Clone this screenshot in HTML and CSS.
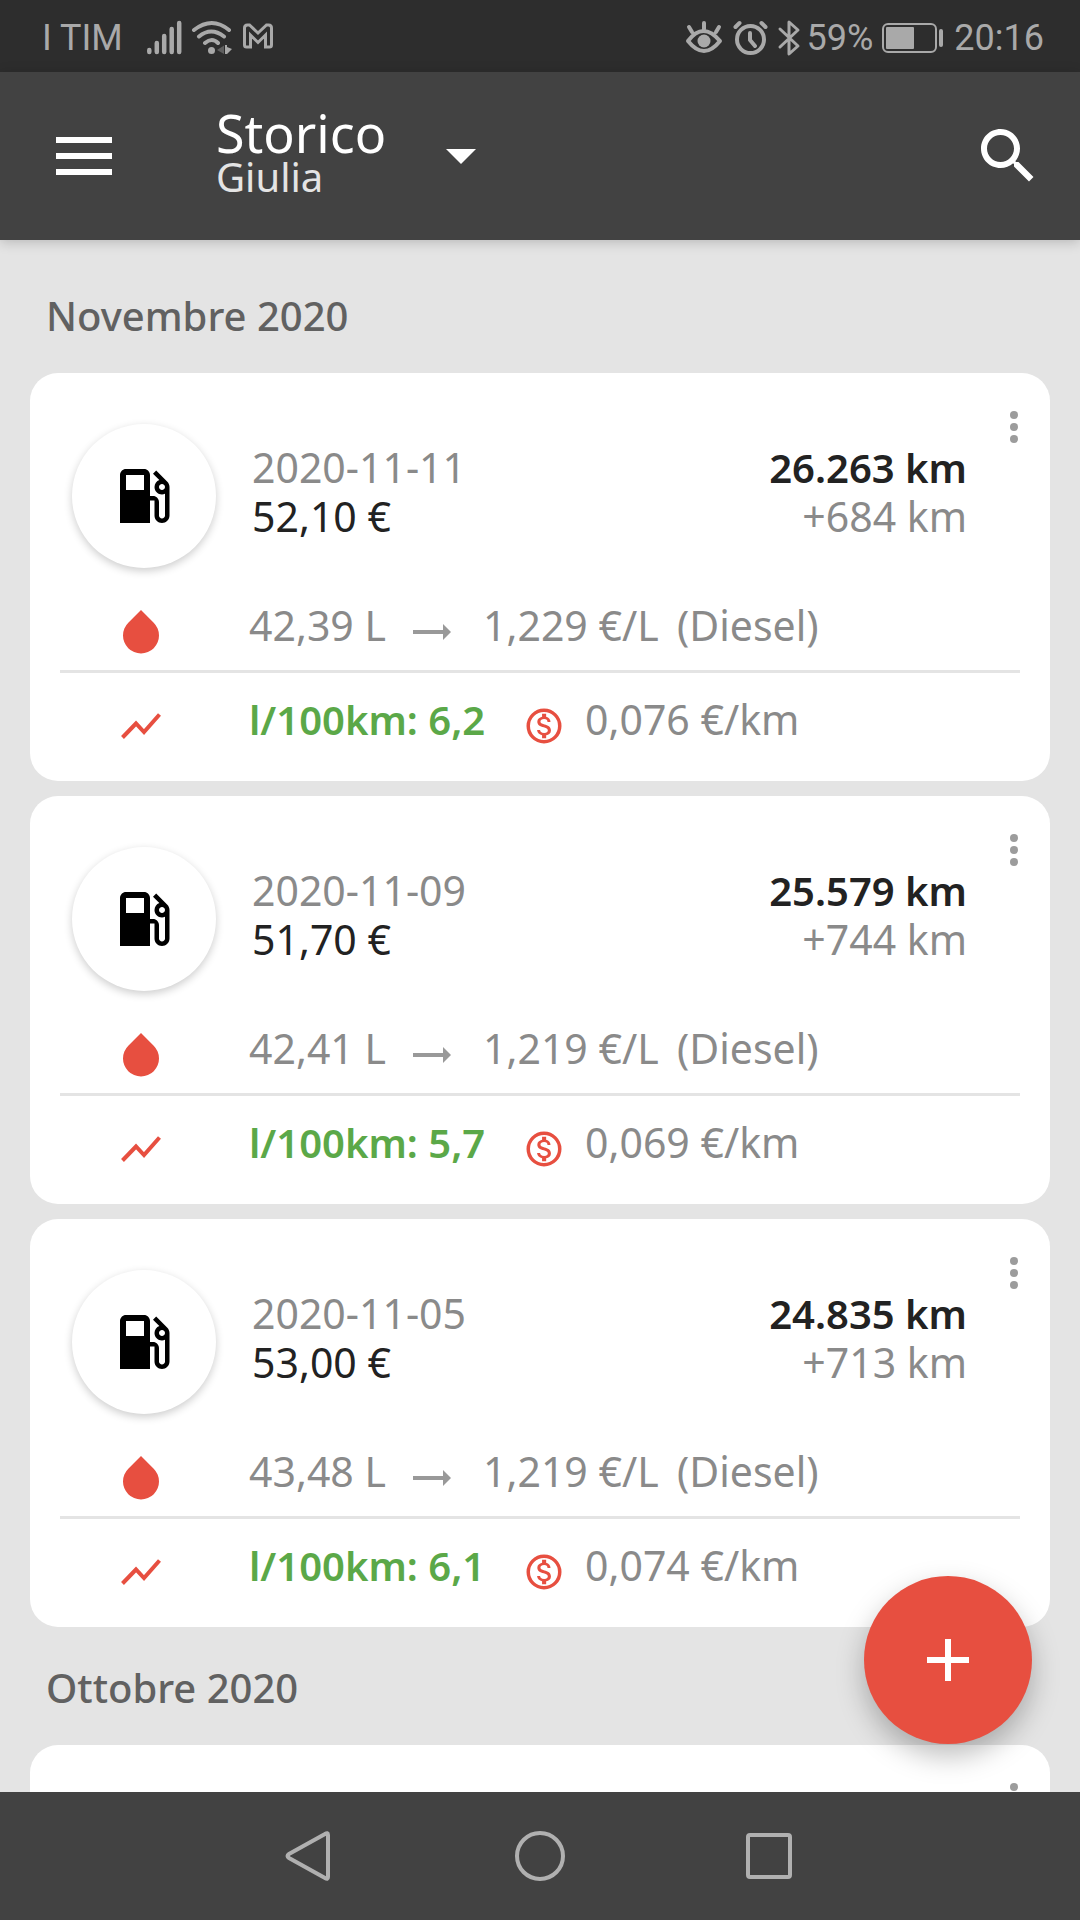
FILE: index.html
```html
<!DOCTYPE html>
<html lang="it">
<head>
<meta charset="utf-8">
<meta name="viewport" content="width=device-width, initial-scale=1">
<title>Storico</title>
<link rel="stylesheet" href="styles.css">
</head>
<body>
<svg class="sprite" aria-hidden="true">
  <symbol id="pump" viewBox="0 0 24 24"><path d="M19.77 7.23l.01-.01-3.72-3.72L15 4.56l2.11 2.11c-.94.36-1.61 1.26-1.61 2.33 0 1.38 1.12 2.5 2.5 2.5.36 0 .69-.08 1-.21v7.21c0 .55-.45 1-1 1s-1-.45-1-1V14c0-1.1-.9-2-2-2h-1V5c0-1.1-.9-2-2-2H6c-1.1 0-2 .9-2 2v16h10v-7.5h1.5v5c0 1.38 1.12 2.5 2.5 2.5s2.5-1.12 2.5-2.5V9c0-.69-.28-1.32-.73-1.77zM12 10H6V5h6v5zm6 0c-.55 0-1-.45-1-1s.45-1 1-1 1 .45 1 1-.45 1-1 1z"/></symbol>
  <symbol id="drop" viewBox="0 0 36 44"><path d="M18 0L30.7 12.7A18 18 0 1 1 5.3 12.7z"/></symbol>
  <symbol id="trend" viewBox="0 0 40 28"><path d="M1.5 25.5L15 11.5L23 20L38.500 2.500" fill="none" stroke="currentColor" stroke-width="4"/></symbol>
  <symbol id="coin" viewBox="0 0 24 24"><circle cx="12" cy="12" r="9" fill="none" stroke="currentColor" stroke-width="2"/><path d="M12.31 11.14c-1.77-.45-2.34-.94-2.34-1.67 0-.84.79-1.43 2.1-1.43 1.38 0 1.9.66 1.94 1.64h1.71c-.05-1.34-.87-2.57-2.49-2.97V5H10.9v1.69c-1.51.32-2.72 1.3-2.72 2.81 0 1.79 1.49 2.69 3.66 3.21 1.95.46 2.34 1.15 2.34 1.87 0 .53-.39 1.39-2.1 1.39-1.6 0-2.23-.72-2.32-1.64H8.04c.1 1.7 1.36 2.66 2.86 2.97V19h2.34v-1.67c1.52-.29 2.72-1.16 2.73-2.77-.01-2.2-1.9-2.96-3.66-3.42z"/></symbol>
  <symbol id="arrow" viewBox="0 0 38 16"><path d="M0 6h30V0l8 8-8 8v-6H0z"/></symbol>
  <symbol id="dots" viewBox="0 0 8 32"><circle cx="4" cy="4" r="4"/><circle cx="4" cy="16" r="4"/><circle cx="4" cy="28" r="4"/></symbol>
</svg>

<div class="status">
  <div class="status-side">
    <span class="carrier">I TIM</span>
    <svg width="130" height="36" viewBox="0 0 130 36" aria-hidden="true">
      <g stroke="currentColor" stroke-width="4.500" stroke-linecap="round"><path d="M4.300 30v2M11.800 23v9M19.200 16v16M26.700 9v23M34.200 3v29"/></g>
      <g fill="none" stroke="currentColor" stroke-width="4" stroke-linecap="round"><path d="M49 10q18-14 35 0M54 16.500q12-10 25 0M60 23q7-6 13 0"/></g>
      <circle cx="66.500" cy="30.500" r="3.500"/>
      <path d="M79 25.500v8.500l-7-4z" opacity=".4"/><path d="M80 25h2v2l5 2-5 5h-2z"/>
      <path d="M99.500 25V8q0-3 3-3h2l8.500 8 8.500-8h2q3 0 3 3v17q0 2-2 2h-4V15l-7.500 7.500L105.500 15v12h-4q-2 0-2-2z" fill="none" stroke="currentColor" stroke-width="3"/>
    </svg>
  </div>
  <div class="status-side">
    <svg width="122" height="38" viewBox="0 0 122 38" aria-hidden="true">
      <g fill="none" stroke="currentColor" stroke-width="4" stroke-linecap="round" stroke-linejoin="round">
        <path d="M3 22q15-20 32 0q-16 20-32 0zM19 10V4M7 13L4 8M31 13l3-5"/>
        <circle cx="65.500" cy="20.500" r="13.500"/><path d="M65 14v7l5 6M50.500 8l4-4M80.500 8l-4-4"/>
        <path d="M95 10l18 17-9 8V3l9 8-18 17" stroke-width="3"/>
      </g>
      <circle cx="19" cy="22" r="6.500"/>
    </svg>
    <span>59%</span>
    <svg class="battery" width="62" height="30" viewBox="0 0 62 30" aria-hidden="true">
      <rect x="1" y="1" width="53" height="28" rx="5" fill="none" stroke="currentColor" stroke-width="2"/>
      <rect x="4" y="4" width="28" height="22" rx="1"/><rect x="57" y="6" width="4" height="18" rx="2"/>
    </svg>
    <span>20:16</span>
  </div>
</div>

<header class="appbar">
  <button class="icon-button" aria-label="Menu"><svg width="56" height="38" viewBox="0 0 56 38"><path d="M0 0h56v6H0zM0 16h56v6H0zM0 32h56v6H0z"/></svg></button>
  <button class="picker">
    <span class="picker-text"><span class="picker-title">Storico</span><span class="picker-name">Giulia</span></span>
    <svg width="30" height="15" viewBox="0 0 30 15" aria-hidden="true"><path d="M0 0h30L15 15z"/></svg>
  </button>
  <button class="icon-button" aria-label="Cerca"><svg width="72" height="72" viewBox="0 0 24 24"><path d="M15.500 14h-.79l-.28-.27C15.410 12.590 16 11.110 16 9.500 16 5.910 13.090 3 9.500 3S3 5.910 3 9.500 5.910 16 9.500 16c1.610 0 3.090-.59 4.230-1.570l.27.28v.79l5 4.990L20.490 19l-4.990-5zm-6 0C7.010 14 5 11.990 5 9.500S7.010 5 9.500 5 14 7.010 14 9.500 11.990 14 9.500 14z"/></svg></button>
</header>

<main class="list">
  <h2 class="month">Novembre 2020</h2>

  <article class="card">
    <button class="more" aria-label="Altro"><svg width="8" height="32"><use href="#dots"/></svg></button>
    <div class="summary">
      <div class="badge"><svg width="72" height="72"><use href="#pump"/></svg></div>
      <div class="lines"><span class="muted">2020-11-11</span><span>52,10 €</span></div>
      <div class="lines lines-end"><strong>26.263 km</strong><span class="muted">+684 km</span></div>
    </div>
    <div class="row volume">
      <svg class="lead" width="36" height="44"><use href="#drop"/></svg>
      <span>42,39 L</span><svg class="arrow" width="38" height="16"><use href="#arrow"/></svg><span>1,229 €/L</span><span>(Diesel)</span>
    </div>
    <div class="row usage">
      <svg class="lead" width="40" height="28"><use href="#trend"/></svg>
      <strong class="good">l/100km: 6,2</strong><svg class="coin" width="42" height="42"><use href="#coin"/></svg><span>0,076 €/km</span>
    </div>
  </article>

  <article class="card">
    <button class="more" aria-label="Altro"><svg width="8" height="32"><use href="#dots"/></svg></button>
    <div class="summary">
      <div class="badge"><svg width="72" height="72"><use href="#pump"/></svg></div>
      <div class="lines"><span class="muted">2020-11-09</span><span>51,70 €</span></div>
      <div class="lines lines-end"><strong>25.579 km</strong><span class="muted">+744 km</span></div>
    </div>
    <div class="row volume">
      <svg class="lead" width="36" height="44"><use href="#drop"/></svg>
      <span>42,41 L</span><svg class="arrow" width="38" height="16"><use href="#arrow"/></svg><span>1,219 €/L</span><span>(Diesel)</span>
    </div>
    <div class="row usage">
      <svg class="lead" width="40" height="28"><use href="#trend"/></svg>
      <strong class="good">l/100km: 5,7</strong><svg class="coin" width="42" height="42"><use href="#coin"/></svg><span>0,069 €/km</span>
    </div>
  </article>

  <article class="card">
    <button class="more" aria-label="Altro"><svg width="8" height="32"><use href="#dots"/></svg></button>
    <div class="summary">
      <div class="badge"><svg width="72" height="72"><use href="#pump"/></svg></div>
      <div class="lines"><span class="muted">2020-11-05</span><span>53,00 €</span></div>
      <div class="lines lines-end"><strong>24.835 km</strong><span class="muted">+713 km</span></div>
    </div>
    <div class="row volume">
      <svg class="lead" width="36" height="44"><use href="#drop"/></svg>
      <span>43,48 L</span><svg class="arrow" width="38" height="16"><use href="#arrow"/></svg><span>1,219 €/L</span><span>(Diesel)</span>
    </div>
    <div class="row usage">
      <svg class="lead" width="40" height="28"><use href="#trend"/></svg>
      <strong class="good">l/100km: 6,1</strong><svg class="coin" width="42" height="42"><use href="#coin"/></svg><span>0,074 €/km</span>
    </div>
  </article>

  <h2 class="month">Ottobre 2020</h2>

  <article class="card card-empty">
    <button class="more" aria-label="Altro"><svg width="8" height="32"><use href="#dots"/></svg></button>
  </article>
</main>

<button class="fab" aria-label="Aggiungi"><svg width="42" height="42" viewBox="0 0 42 42"><path d="M18 0h6v18h18v6H24v18h-6V24H0v-6h18z"/></svg></button>

<nav class="navbar">
  <button class="nav-button" aria-label="Indietro"><svg width="52" height="52" viewBox="0 0 52 52"><path d="M40 4Q43 2 43 5v42q0 3-3 1L4 28q-3-2 0-4z"/></svg></button>
  <button class="nav-button" aria-label="Home"><svg width="52" height="52" viewBox="0 0 52 52"><circle cx="26" cy="26" r="23"/></svg></button>
  <button class="nav-button" aria-label="Recenti"><svg width="52" height="52" viewBox="0 0 52 52"><rect x="5" y="5" width="42" height="42" rx="2"/></svg></button>
</nav>
</body>
</html>
```
FILE: styles.css
```css
* {
  box-sizing: border-box;
}

body {
  margin: 0;
  height: 100vh;
  display: flex;
  flex-direction: column;
  overflow: hidden;
  position: relative;
  background: #e4e4e4;
  color: #222;
  font: 41px/49px "Noto Sans", "Open Sans", sans-serif;
}

button {
  border: 0;
  padding: 0;
  background: none;
  color: inherit;
  font: inherit;
  text-align: left;
}

svg {
  display: block;
  flex: none;
  fill: currentColor;
}

.sprite {
  position: absolute;
  width: 0;
  height: 0;
}

/* System status bar */
.status {
  flex: none;
  height: 72px;
  padding: 3px 36px 0 42px;
  display: flex;
  justify-content: space-between;
  align-items: center;
  background: #2d2d2d;
  color: #a9a9a9;
  font: 36px/42px Roboto, sans-serif;
}

.status-side {
  display: flex;
  align-items: center;
}

.carrier {
  margin-right: 22px;
}

.battery {
  margin: 0 10px 0 9px;
}

/* App bar */
.appbar {
  flex: none;
  height: 168px;
  padding: 0 36px 0 56px;
  display: flex;
  align-items: center;
  background: #424242;
  color: #fff;
  box-shadow: 0 2px 12px rgba(0, 0, 0, 0.2);
  z-index: 1;
}

.picker {
  margin: 0 auto 0 104px;
  display: flex;
  align-items: center;
  gap: 60px;
}

.picker-text {
  display: flex;
  flex-direction: column;
  padding-bottom: 6px;
}

.picker-title {
  font-size: 52px;
  line-height: 48px;
}

.picker-name {
  color: #e4e4e4;
  font-size: 40px;
  line-height: 40px;
}

/* History list */
.list {
  flex: 1;
  min-height: 0;
  overflow: hidden;
  padding: 15px 30px 0;
}

.month {
  margin: 0;
  padding: 36px 16px 33px;
  color: #616161;
  font-size: 40px;
  font-weight: 500;
}

.card {
  position: relative;
  padding: 51px 30px 37px;
  border-radius: 28px;
  background: #fff;
}

.card + .card {
  margin-top: 15px;
}

.card-empty {
  height: 408px;
}

.more {
  position: absolute;
  top: 24px;
  right: 12px;
  width: 48px;
  height: 60px;
  display: grid;
  place-items: center;
  color: #9c9c9c;
}

.summary {
  display: flex;
  padding: 0 53px 0 12px;
}

.badge {
  width: 144px;
  height: 144px;
  display: grid;
  place-items: center;
  border-radius: 50%;
  color: #000;
  box-shadow: 0 3px 9px rgba(0, 0, 0, 0.2);
}

.lines {
  display: flex;
  flex-direction: column;
  padding: 19px 0 0 36px;
}

.lines-end {
  margin-left: auto;
  text-align: right;
}

strong {
  font-size: 40px;
  font-weight: 600;
}

.muted,
.row {
  color: #8a8a8a;
}

.row {
  display: grid;
  grid-template-rows: 49px;
  align-items: center;
}

.volume {
  grid-template-columns: 189px 164px 70px 194px auto;
  justify-content: start;
  padding: 33px 0 20px;
  border-bottom: 3px solid #e4e4e4;
}

.usage {
  grid-template-columns: 189px 274px 62px auto;
  justify-content: start;
  padding-top: 22px;
}

.lead,
.arrow,
.coin {
  margin-top: 12px;
}

.lead {
  justify-self: center;
  margin-right: 27px;
}

.lead,
.coin {
  color: #e74f40;
}

.arrow {
  color: #999;
}

.good {
  color: #5ba848;
}

/* Floating action */
.fab {
  position: absolute;
  right: 48px;
  bottom: 176px;
  width: 168px;
  height: 168px;
  display: grid;
  place-items: center;
  border-radius: 50%;
  background: #e74f40;
  color: #fff;
  box-shadow: 0 12px 28px rgba(0, 0, 0, 0.26);
}

/* System navigation */
.navbar {
  flex: none;
  height: 128px;
  display: flex;
  justify-content: center;
  align-items: center;
  gap: 177px;
  background: #424242;
  z-index: 1;
}

.nav-button svg {
  fill: none;
  stroke: #b0b0b0;
  stroke-width: 4;
}
```
